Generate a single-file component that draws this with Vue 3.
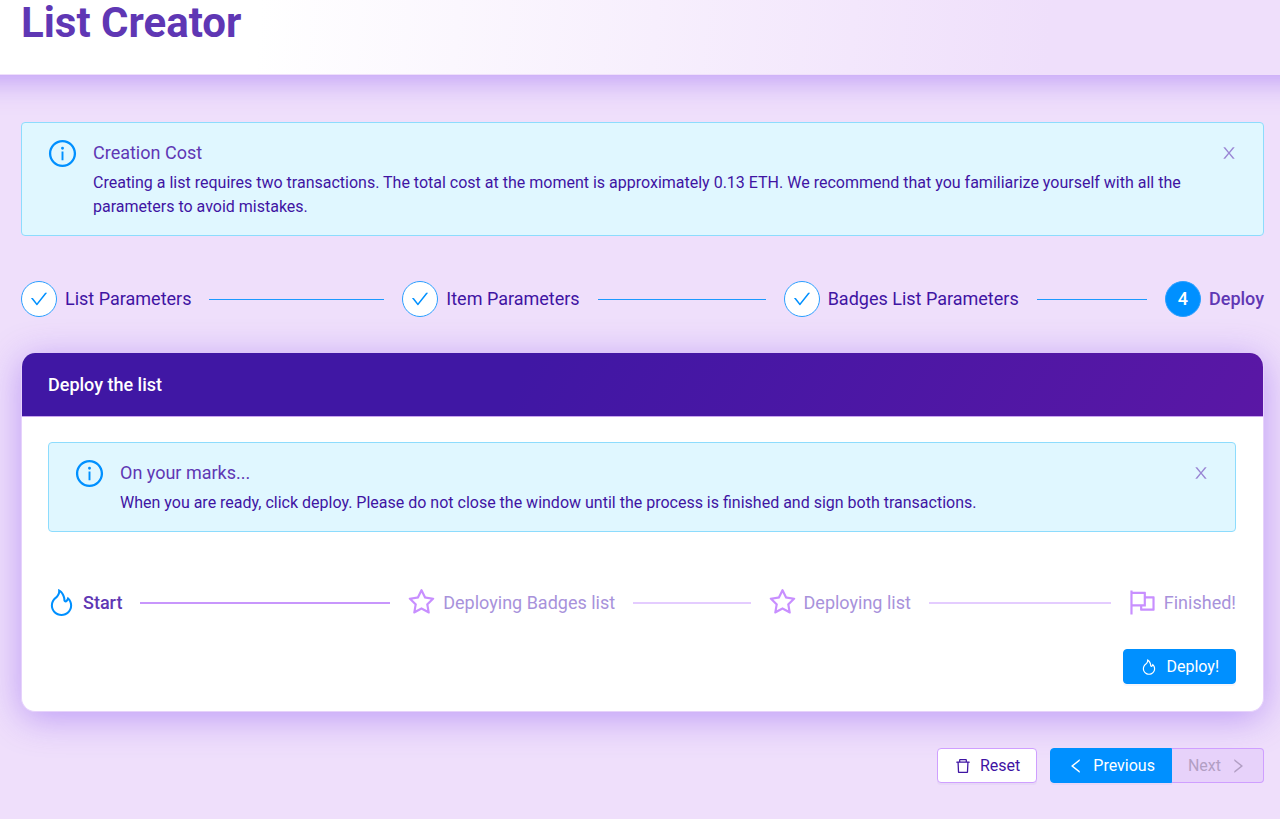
<script setup>
import { ref, h } from 'vue'

const paths = {
  info: [
    'M512 64C264.6 64 64 264.6 64 512s200.6 448 448 448 448-200.6 448-448S759.4 64 512 64zm0 820c-205.4 0-372-166.6-372-372s166.6-372 372-372 372 166.6 372 372-166.6 372-372 372z',
    'M464 336a48 48 0 1096 0 48 48 0 10-96 0zm72 112h-48c-4.4 0-8 3.6-8 8v272c0 4.4 3.6 8 8 8h48c4.4 0 8-3.6 8-8V456c0-4.4-3.6-8-8-8z',
  ],
  close: ['M563.8 512l262.5-312.9c4.4-5.2.7-13.1-6.1-13.1h-79.8c-4.7 0-9.2 2.1-12.3 5.7L511.6 449.8 295.1 191.7c-3-3.6-7.5-5.7-12.3-5.7H203c-6.8 0-10.5 7.9-6.1 13.1L459.4 512 196.9 824.9A7.95 7.95 0 00203 838h79.8c4.7 0 9.2-2.1 12.3-5.7l216.5-258.1 216.5 258.1c3 3.6 7.5 5.7 12.3 5.7h79.8c6.8 0 10.5-7.9 6.1-13.1L563.8 512z'],
  check: ['M912 190h-69.9c-9.8 0-19.1 4.5-25.1 12.2L404.7 724.5 207 474a32 32 0 00-25.1-12.2H112c-6.7 0-10.4 7.7-6.3 12.9l273.9 347c12.8 16.2 37.4 16.2 50.3 0l488.4-618.9c4.1-5.1.4-12.8-6.3-12.8z'],
  star: ['M908.1 353.1l-253.9-36.9L540.7 86.1c-3.1-6.3-8.2-11.4-14.5-14.5-15.8-7.8-35-1.3-42.9 14.5L369.8 316.2l-253.9 36.9c-7 1-13.4 4.3-18.3 9.3a32.05 32.05 0 00.6 45.3l183.7 179.1-43.4 252.9a31.95 31.95 0 0046.4 33.7L512 754l227.1 119.4c6.2 3.3 13.4 4.4 20.3 3.2 17.4-3 29.1-19.5 26.1-36.9l-43.4-252.9 183.7-179.1c5-4.9 8.3-11.3 9.3-18.3 2.7-17.5-9.5-33.7-27-36.3zM664.8 561.6l36.1 210.3L512 672.7 323.1 772l36.1-210.3-152.8-149L417.6 382 512 190.7 606.4 382l211.2 30.7-152.8 148.9z'],
  flag: ['M880 305H624V192c0-17.7-14.3-32-32-32H184v-40c0-4.4-3.6-8-8-8h-56c-4.4 0-8 3.6-8 8v784c0 4.4 3.6 8 8 8h56c4.4 0 8-3.6 8-8V640h248v113c0 17.7 14.3 32 32 32h416c17.7 0 32-14.3 32-32V337c0-17.7-14.3-32-32-32zM184 568V232h368v336H184zm656 145H504v-73h112c4.4 0 8-3.6 8-8V377h216v336z'],
  fire: ['M834.1 469.2A347.49 347.49 0 00751.2 354l-29.1-26.7a8.09 8.09 0 00-13 3.3l-13 37.3c-8.1 23.4-23 47.3-44.1 70.8-1.4 1.5-3 1.9-4.1 2-1.1.1-2.8-.1-4.3-1.5-1.4-1.2-2.1-3-2-4.8 3.7-60.2-14.3-128.1-53.7-202C555.3 171 510 123.1 453.4 89.7l-41.3-24.3c-5.4-3.2-12.3 1-12 7.3l2.2 48c1.5 32.8-2.3 61.8-11.3 85.9-11 29.5-26.8 56.9-47 81.5a295.64 295.64 0 01-47.5 46.1 352.6 352.6 0 00-100.3 121.5A347.75 347.75 0 00160 610c0 47.2 9.3 92.9 27.7 136a349.4 349.4 0 0075.5 110.9c32.4 32 70 57.2 111.9 74.7C418.5 949.8 464.5 959 512 959s93.5-9.2 136.9-27.3A348.6 348.6 0 00760.8 857c32.4-32 57.8-69.4 75.5-110.9a344.2 344.2 0 0027.7-136c0-48.8-10-96.2-29.9-140.9zM713 808.5c-53.7 53.2-125 82.4-201 82.4s-147.3-29.2-201-82.4c-53.5-53.1-83-123.5-83-198.4 0-43.5 9.8-85.2 29.1-124 18.8-37.9 46.8-71.8 80.8-97.9a349.6 349.6 0 0058.6-56.8c25-30.5 44.6-64.5 58.2-101a240 240 0 0012.1-46.5c24.1 22.2 44.3 49 61.2 80.4 33.4 62.6 48.8 118.3 45.8 165.7a74.01 74.01 0 0024.4 59.8 73.36 73.36 0 0053.4 18.8c19.7-1 37.8-9.7 51-24.4 13.3-14.9 24.8-30.1 34.4-45.6 14 17.9 25.7 37.4 35 58.4 15.9 35.8 24 73.9 24 113.1 0 74.9-29.5 145.4-83 198.4z'],
  trash: ['M360 184h-8c4.4 0 8-3.6 8-8v8h304v-8c0 4.4 3.6 8 8 8h-8v72h72v-80c0-35.3-28.7-64-64-64H352c-35.3 0-64 28.7-64 64v80h72v-72zm504 72H160c-17.7 0-32 14.3-32 32v32c0 4.4 3.6 8 8 8h60.4l24.7 523c1.6 34.1 29.8 61 63.9 61h454c34.2 0 62.3-26.8 63.9-61l24.7-523H888c4.4 0 8-3.6 8-8v-32c0-17.7-14.3-32-32-32zM731.3 840H292.7l-24.2-512h487l-24.2 512z'],
  left: ['M724 218.3V141c0-6.7-7.7-10.4-12.9-6.3L260.3 486.8a31.86 31.86 0 000 50.3l450.8 352.1c5.3 4.1 12.9.4 12.9-6.3v-77.3c0-4.9-2.3-9.6-6.1-12.6l-360-281 360-281.1c3.8-3 6.1-7.7 6.1-12.6z'],
  right: ['M765.7 486.8L314.9 134.7A7.97 7.97 0 00302 141v77.3c0 4.9 2.3 9.6 6.1 12.6l360 281.1-360 281.1c-3.9 3-6.1 7.7-6.1 12.6V883c0 6.7 7.7 10.4 12.9 6.3l450.8-352.1a31.96 31.96 0 000-50.4z'],
}

const Icon = (props) =>
  h(
    'svg',
    { viewBox: '0 0 1024 1024', width: props.size, height: props.size, fill: 'currentColor', 'aria-hidden': 'true' },
    paths[props.name].map((d) => h('path', { d })),
  )
Icon.props = ['name', 'size']

const showCost = ref(true)
const showMarks = ref(true)

const steps = ['List Parameters', 'Item Parameters', 'Badges List Parameters', 'Deploy']
const current = 3

const stages = [
  { title: 'Start', icon: 'fire' },
  { title: 'Deploying Badges list', icon: 'star' },
  { title: 'Deploying list', icon: 'star' },
  { title: 'Finished!', icon: 'flag' },
]
</script>

<template>
  <div class="page">
    <header class="page-header">
      <h1>List Creator</h1>
    </header>

    <main>
      <section v-if="showCost" class="alert">
        <Icon class="alert-icon" name="info" :size="31" />
        <div class="alert-body">
          <h2>Creation Cost</h2>
          <p>
            Creating a list requires two transactions. The total cost at the moment is approximately 0.13 ETH. We
            recommend that you familiarize yourself with all the parameters to avoid mistakes.
          </p>
        </div>
        <button class="close" type="button" aria-label="Close" @click="showCost = false">
          <Icon name="close" :size="18" />
        </button>
      </section>

      <ol class="steps">
        <li v-for="(step, i) in steps" :key="step" :class="{ active: i === current }">
          <span class="bubble">
            <Icon v-if="i < current" name="check" :size="20" />
            <template v-else>{{ i + 1 }}</template>
          </span>
          <span class="label">{{ step }}</span>
          <span v-if="i < steps.length - 1" class="rail"></span>
        </li>
      </ol>

      <section class="card">
        <h2 class="card-head">Deploy the list</h2>
        <div class="card-body">
          <section v-if="showMarks" class="alert">
            <Icon class="alert-icon" name="info" :size="31" />
            <div class="alert-body">
              <h2>On your marks...</h2>
              <p>
                When you are ready, click deploy. Please do not close the window until the process is finished and sign
                both transactions.
              </p>
            </div>
            <button class="close" type="button" aria-label="Close" @click="showMarks = false">
              <Icon name="close" :size="18" />
            </button>
          </section>

          <ol class="steps stages">
            <li v-for="(stage, i) in stages" :key="stage.title" :class="{ active: i === 0 }">
              <span class="stage-icon"><Icon :name="stage.icon" :size="31" /></span>
              <span class="label">{{ stage.title }}</span>
              <span v-if="i < stages.length - 1" class="rail"></span>
            </li>
          </ol>

          <div class="card-actions">
            <button class="btn primary" type="button"><Icon name="fire" :size="18" />Deploy!</button>
          </div>
        </div>
      </section>

      <div class="actions">
        <button class="btn" type="button"><Icon name="trash" :size="18" />Reset</button>
        <div class="group">
          <button class="btn primary previous" type="button"><Icon name="left" :size="18" />Previous</button>
          <button class="btn next" type="button" disabled>Next<Icon name="right" :size="18" /></button>
        </div>
      </div>
    </main>
  </div>
</template>

<style>
body {
  margin: 0;
  background: #efdffb;
}
</style>

<style scoped>
.page {
  min-height: 100vh;
  box-sizing: border-box;
  overflow: hidden;
  font-family: Roboto, 'Liberation Sans', sans-serif;
  font-size: 16px;
  line-height: 24px;
  color: #3f14a3;
}
h1,
h2,
p,
ol {
  margin: 0;
  padding: 0;
}
svg {
  display: block;
  flex: none;
}
.page-header {
  margin: 0 -40px;
  padding: 0 61px 29px;
  border-bottom: 1px solid #efdffb;
  background: linear-gradient(95deg, #fff 22%, #efdffb 80%);
  box-shadow: 0 4px 32px rgba(120, 60, 240, 0.45);
}
h1 {
  font-size: 42px;
  line-height: 45px;
  font-weight: 700;
  color: #5f37b4;
}
main {
  padding: 47px 16px 36px 21px;
}
.alert {
  display: flex;
  align-items: flex-start;
  padding: 15px 25px 16px;
  border: 1px solid #8ddcfd;
  border-radius: 4px;
  background: #e0f7ff;
}
.alert-icon {
  margin-right: 15px;
  color: #0090ff;
}
.alert-body {
  flex: 1;
}
.alert h2 {
  font-size: 18px;
  line-height: 28px;
  font-weight: 400;
  color: #5f37b4;
  margin: 1px 0 4px;
}
.close {
  display: flex;
  margin: 6px 0 0 36px;
  padding: 0;
  border: 0;
  background: none;
  color: #9a86d4;
  cursor: pointer;
}
.steps {
  display: flex;
  gap: 18px;
  margin-top: 45px;
  list-style: none;
  font-size: 18px;
}
.steps li {
  display: flex;
  align-items: center;
  flex: 1 1 0;
  white-space: nowrap;
}
.steps li:last-child {
  flex: none;
}
.bubble {
  display: flex;
  align-items: center;
  justify-content: center;
  flex: none;
  box-sizing: border-box;
  width: 36px;
  height: 36px;
  margin-right: 8px;
  border: 1px solid #2b9fff;
  border-radius: 50%;
  background: #fff;
  color: #0090ff;
}
.active .bubble {
  background: #0090ff;
  color: #fff;
  font-weight: 500;
}
.active .label {
  font-weight: 500;
  color: #5f37b4;
}
.rail {
  flex: 1;
  height: 1px;
  margin-left: 18px;
  background: #1c9aff;
}
.card {
  margin-top: 36px;
  border: 1px solid #e6d2fb;
  border-top: 0;
  border-radius: 14px;
  overflow: hidden;
  background: #fff;
  box-shadow: 0 6px 36px rgba(120, 60, 240, 0.42);
}
.card-head {
  padding: 18px 26px;
  border-bottom: 1px solid #c9a5ef;
  background: linear-gradient(120deg, #4017a4 40%, #5a17a5 100%);
  font-size: 18px;
  line-height: 27px;
  font-weight: 500;
  color: #fff;
}
.card-body {
  padding: 25px 27px 27px 26px;
}
.stages {
  margin-top: 55px;
  color: #a892db;
}
.stage-icon {
  display: flex;
  justify-content: center;
  flex: none;
  width: 27px;
  margin-right: 8px;
  color: #c88fff;
}
.active .stage-icon {
  color: #0090ff;
}
.stages .rail {
  height: 2px;
  background: #e4ccff;
}
.stages .active .rail {
  background: #c896fc;
}
.card-actions,
.actions {
  display: flex;
  justify-content: flex-end;
}
.card-actions {
  margin-top: 31px;
}
.actions {
  gap: 13px;
  margin-top: 36px;
}
.group {
  display: flex;
}
.btn {
  display: flex;
  align-items: center;
  gap: 8px;
  height: 35px;
  padding: 0 16px;
  border: 1px solid #cf9fff;
  border-radius: 4px;
  background: #fff;
  font: 400 16px/24px Roboto, 'Liberation Sans', sans-serif;
  color: #3f14a3;
  box-shadow: 0 2px 0 rgba(63, 20, 163, 0.04);
  cursor: pointer;
}
.btn.primary {
  border-color: #0090ff;
  background: #0090ff;
  color: #fff;
}
.previous {
  border-radius: 4px 0 0 4px;
}
.btn.next {
  border-left: 0;
  border-radius: 0 4px 4px 0;
  background: #e7d2fa;
  color: #b29fc4;
  box-shadow: none;
  cursor: default;
}
</style>
